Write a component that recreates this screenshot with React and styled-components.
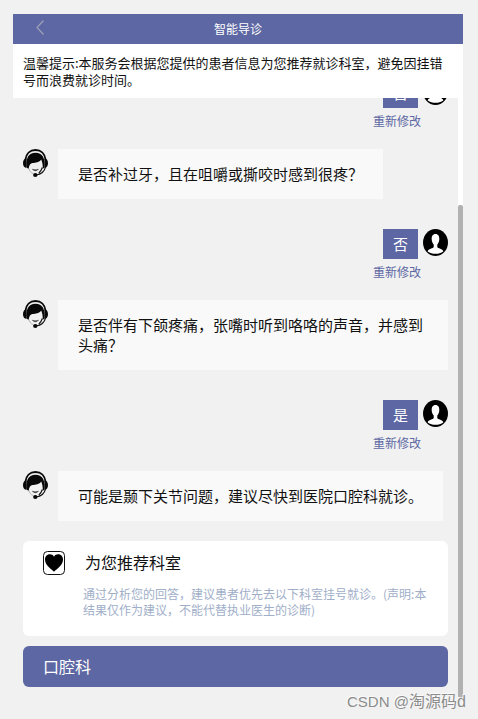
import React from 'react';
import styled, { createGlobalStyle } from 'styled-components';


const GlobalStyle = createGlobalStyle`
    * {
        box-sizing: border-box;
    }
    body {
        margin: 0;
        background: #F1F1F1;
        font-family: 'Noto Sans CJK SC', sans-serif;
        color: #111;
        overflow: hidden;
    }
    p, h1, h2 {
        margin: 0;
        font-weight: 400;
    }
`

const Page = styled.div`
    position: relative;
    width: 478px;
    height: 719px;
    padding: 14px 15px 21px 13px;
`

const Screen = styled.div`
    display: flex;
    flex-direction: column;
    width: 450px;
    height: 684px;
`

const Header = styled.header`
    display: grid;
    grid-template-columns: 54px 1fr 54px;
    flex: none;
    height: 30px;
    background: #5D67A3;
    color: #FFF;
`

const BackIcon = styled.svg`
    width: 8px;
    height: 15px;
    margin: 6px 0 0 23px;
    fill: none;
    stroke: #9DA1B8;
    stroke-width: 1.2;
`

const Title = styled.h1`
    font-size: 12px;
    line-height: 30px;
    text-align: center;
`

const Notice = styled.p`
    flex: none;
    height: 54px;
    padding: 10px 16px 0 10px;
    background: #FFF;
    font-size: 13px;
    line-height: 17px;
    white-space: pre-line;
`

const Body = styled.div`
    display: flex;
    flex: 1;
    min-height: 0;
`

const Chat = styled.main`
    flex: 1;
    overflow: hidden;
    padding: 0 10px;
`

const Messages = styled.div`
    margin-top: -20px;
`

const Track = styled.div`
    width: 5px;
    padding-top: 107px;
    background: linear-gradient(#FFF 110px, transparent 110px);
`

const Thumb = styled.div`
    height: 493px;
    border-radius: 2px;
    background: #B1B1B1;
`

const QuestionRow = styled.div`
    display: flex;
    align-items: flex-start;
    gap: 10px;
    margin-bottom: ${props => props.$last ? 20 : 30}px;
`

const Bubble = styled.p`
    padding: 15px 20px;
    background: #F9F9F9;
    font-size: 15px;
    line-height: 20px;
`

const AnswerBlock = styled.div`
    height: 41px;
    margin-bottom: 30px;
`

const AnswerRow = styled.div`
    display: flex;
    justify-content: flex-end;
    gap: 5px;
    height: 30px;
`

const AnswerText = styled.p`
    width: 35px;
    background: #5D67A3;
    color: #FFF;
    font-size: 15px;
    line-height: 30px;
    text-align: center;
`

const Redo = styled.p`
    padding: 4px 27px 0 0;
    color: #5D67A3;
    font-size: 12px;
    line-height: 18px;
    text-align: right;
`

const AgentSvg = styled.svg`
    flex: none;
    width: 25px;
    height: 28px;
`

const UserSvg = styled.svg`
    flex: none;
    width: 25px;
    height: 27px;
`

const Card = styled.section`
    height: 95px;
    padding: 10px 20px;
    border-radius: 6px;
    background: #FFF;
`

const CardHead = styled.div`
    display: flex;
    gap: 20px;
    height: 24px;
`

const CardTitle = styled.h2`
    font-size: 16px;
    line-height: 22px;
`

const HeartSvg = styled.svg`
    width: 22px;
    height: 24px;
`

const CardText = styled.p`
    padding: 11px 0 0 40px;
    color: #A0AEC8;
    font-size: 12px;
    line-height: 16px;
    white-space: pre;
`

const Department = styled.button`
    display: block;
    width: 100%;
    height: 41px;
    margin-top: 10px;
    padding: 0 20px;
    border: 0;
    border-radius: 6px;
    background: #5D67A3;
    color: #FFF;
    font-family: inherit;
    font-size: 16px;
    line-height: 41px;
    text-align: left;
`

const Watermark = styled.span`
    position: absolute;
    left: 347px;
    top: 690px;
    color: #8C8C8C;
    font-family: 'Liberation Sans', 'Noto Sans CJK SC', sans-serif;
    font-size: 15px;
    line-height: 24px;
    white-space: nowrap;
    text-shadow: -1px -1px 0 rgba(255, 255, 255, 0.8);
`

const WatermarkName = styled.span`
    font-size: 16px;
`


const AgentIcon = () => (
    <AgentSvg viewBox='0 0 25 28'>
        <path d='M2.300 11C3 4.700 7 1 12.500 1S22 4.700 22.700 11' fill='none' stroke='#080808' strokeWidth='1.800' />
        <path d='M3.600 18.500C2.600 9 5.500 3.800 12.500 3.800S22.400 9 21.400 18.500L19.500 20C20.200 17 19.400 13.500 18.200 10.500C16.500 13.200 12.500 13.800 9.500 14C7.500 14.200 6 16 5.600 20Z' fill='#080808' />
        <path d='M3.600 9.500V18.800C1.200 18.800 0 16.900 0 14.200S1.200 9.500 3.600 9.500ZM21.400 9.500V18.800C23.800 18.800 25 16.900 25 14.200S23.800 9.500 21.400 9.500Z' fill='#080808' />
        <path d='M5.600 19C6.300 21.800 8 23.800 10 24.500' fill='none' stroke='#999' strokeWidth='0.700' />
        <path d='M9.300 20.300Q12.300 23.300 15.500 20.300Q12.300 21.300 9.300 20.300Z' fill='#222' stroke='#222' strokeWidth='0.400' />
        <path d='M22.700 17.500C21.500 22.500 18 25.500 13 26M19.300 18.500C18.500 21.200 17.500 22.800 15.800 24' fill='none' stroke='#111' strokeWidth='1.100' />
        <ellipse cx='12.300' cy='26' rx='2.200' ry='1.900' fill='#080808' />
    </AgentSvg>
)

const UserIcon = () => (
    <UserSvg viewBox='0 0 25 27'>
        <ellipse cx='12.500' cy='13.500' rx='12.500' ry='13.500' fill='#000' />
        <path d='M12.500 5C9.700 5 8.500 7.300 8.700 10.300C8.800 12.600 9.600 14.500 10.700 15.600V18C10.500 19.500 5 19.500 4.700 22.500C9 25.600 16 25.600 20.300 22.500C20 19.500 14.500 19.500 14.300 18V15.600C15.400 14.500 16.200 12.600 16.300 10.300C16.500 7.300 15.300 5 12.500 5Z' fill='#FFF' />
    </UserSvg>
)

const HeartIcon = () => (
    <HeartSvg viewBox='0 0 22 24'>
        <rect x='0.500' y='0.500' width='21' height='23' rx='4' fill='#FFF' stroke='#111' />
        <path d='M11 20.800C9 18.500 2 14.500 2 8.500C2 3 8.700 1.600 11 5.700C13.300 1.600 20 3 20 8.500C20 14.500 13 18.500 11 20.800Z' fill='#000' />
    </HeartSvg>
)

const Question = ({text, last=false}) => (
    <QuestionRow $last={last}>
        <AgentIcon />
        <Bubble>{text}</Bubble>
    </QuestionRow>
)

const Answer = ({text}) => (
    <AnswerBlock>
        <AnswerRow>
            <AnswerText>{text}</AnswerText>
            <UserIcon />
        </AnswerRow>
        <Redo>重新修改</Redo>
    </AnswerBlock>
)


const App = () => {
    return (
        <Page>
            <GlobalStyle />
            <Screen>
                <Header>
                    <BackIcon viewBox='0 0 8 15'>
                        <path d='M7.500 0.500L1 7.500L7.500 14.500' />
                    </BackIcon>
                    <Title>智能导诊</Title>
                </Header>
                <Notice>{'温馨提示:本服务会根据您提供的患者信息为您推荐就诊科室，避免因挂错\n号而浪费就诊时间。'}</Notice>
                <Body>
                    <Chat>
                        <Messages>
                            <Answer text='否' />
                            <Question text='是否补过牙，且在咀嚼或撕咬时感到很疼？' />
                            <Answer text='否' />
                            <Question text='是否伴有下颌疼痛，张嘴时听到咯咯的声音，并感到头痛？' />
                            <Answer text='是' />
                            <Question text='可能是颞下关节问题，建议尽快到医院口腔科就诊。' last />
                        </Messages>
                        <Card>
                            <CardHead>
                                <HeartIcon />
                                <CardTitle>为您推荐科室</CardTitle>
                            </CardHead>
                            <CardText>{'通过分析您的回答，建议患者优先去以下科室挂号就诊。(声明:本\n结果仅作为建议，不能代替执业医生的诊断)'}</CardText>
                        </Card>
                        <Department>口腔科</Department>
                    </Chat>
                    <Track>
                        <Thumb />
                    </Track>
                </Body>
            </Screen>
            <Watermark>CSDN @<WatermarkName>淘源码d</WatermarkName></Watermark>
        </Page>
    )
}

export default App
